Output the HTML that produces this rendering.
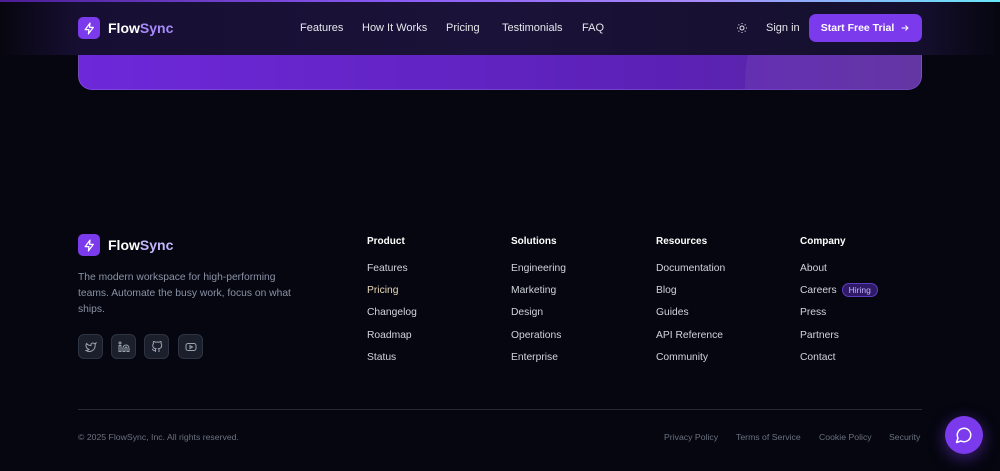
<!DOCTYPE html>
<html><head><meta charset="utf-8"><style>
*{margin:0;padding:0;box-sizing:border-box}
body{width:1000px;height:471px;background:#05060f;font-family:"Liberation Sans",sans-serif;position:relative;overflow:hidden;color:#e5e7eb}
.topline{position:absolute;left:0;top:0;width:1000px;height:2px;background:linear-gradient(90deg,#4c1d95,#8b5cf6 40%,#a78bfa 70%,#67e8f9)}
.nav{position:absolute;left:0;top:2px;width:1000px;height:53px;background:linear-gradient(90deg,#07060f 0%,#170f33 8%,#1a1238 50%,#150f2e 92%,#06060f 100%)}
.card{position:absolute;left:78px;top:55px;width:844px;height:35px;border-radius:0 0 14px 14px;background:linear-gradient(90deg,#6d28d9,#5b21b6 70%,#5b2a9e);overflow:hidden;border:1px solid rgba(167,139,250,.3);border-top:none}
.card:after{content:"";position:absolute;left:666px;top:-120px;width:300px;height:300px;border-radius:50%;background:rgba(255,255,255,.06)}
.logo{position:absolute;display:flex;align-items:center;gap:8px;font-weight:bold;font-size:14px;color:#fff}
.logo .ic{width:22px;height:22px;border-radius:5px;background:#7c3aed;display:flex;align-items:center;justify-content:center}
.logo span.s{color:#a78bfa}
.links a{position:absolute;top:22px;font-size:11px;color:#e5e7eb;text-decoration:none}
.btn{position:absolute;left:809px;top:14px;width:113px;height:28px;border-radius:7px;background:#7c3aed;color:#fff;font-size:10.5px;font-weight:bold;display:flex;align-items:center;justify-content:center;gap:6px}
.col{position:absolute;top:236px;font-size:10.3px}
.col h4{font-size:10px;color:#fff;margin-bottom:16px;font-weight:bold}
.col div{height:22.2px;color:#d1d5db}
.desc{position:absolute;left:78px;top:270px;width:222px;font-size:10.3px;line-height:16px;color:#8b93a7}
.soc{position:absolute;top:334px;width:25px;height:25px;border-radius:6px;background:#1a1f2b;border:1px solid #2e3442;display:flex;align-items:center;justify-content:center}
.hr{position:absolute;left:78px;top:409px;width:844px;height:1px;background:#262a36}
.foot{position:absolute;top:432px;font-size:8.7px;color:#6b7280}
.hiring{display:inline-block;margin-left:5px;padding:1px 6px;border-radius:8px;background:#2e1a66;border:1px solid #5b3cc4;color:#c4b5fd;font-size:8.5px}
.chat{position:absolute;left:945px;top:416px;width:38px;height:38px;border-radius:50%;background:#7c3aed;box-shadow:0 4px 16px rgba(124,58,237,.5);display:flex;align-items:center;justify-content:center}
</style></head><body>
<div class="topline"></div>
<div class="nav"></div>
<div class="card"></div>
<div class="logo" style="left:78px;top:17px"><div class="ic"><svg width="13" height="13" viewBox="0 0 24 24" fill="none" stroke="#fff" stroke-width="2.3" stroke-linejoin="round"><path d="M13 2L4 14h7l-1 8 9-12h-7z"/></svg></div><div>Flow<span class="s">Sync</span></div></div>
<div class="links"><a style="left:300px">Features</a><a style="left:362px">How It Works</a><a style="left:446px">Pricing</a><a style="left:502px">Testimonials</a><a style="left:582px">FAQ</a><a style="left:766px;top:22px">Sign in</a></div>
<svg style="position:absolute;left:736px;top:22px" width="12" height="12" viewBox="0 0 24 24" fill="none" stroke="#e5e7eb" stroke-width="2"><circle cx="12" cy="12" r="4"/><path d="M12 2v2M12 20v2M2 12h2M20 12h2M5 5l1.5 1.5M17.5 17.5L19 19M5 19l1.5-1.5M17.5 6.5L19 5"/></svg>
<div class="btn">Start Free Trial <svg width="10" height="10" viewBox="0 0 24 24" fill="none" stroke="#fff" stroke-width="2.5"><path d="M4 12h15M13 6l6 6-6 6"/></svg></div>

<div class="logo" style="left:78px;top:234px"><div class="ic"><svg width="13" height="13" viewBox="0 0 24 24" fill="none" stroke="#fff" stroke-width="2.3" stroke-linejoin="round"><path d="M13 2L4 14h7l-1 8 9-12h-7z"/></svg></div><div>Flow<span class="s" style="color:#c4b5fd">Sync</span></div></div>
<div class="desc">The modern workspace for high-performing teams. Automate the busy work, focus on what ships.</div>
<div class="soc" style="left:78px"><svg width="12" height="12" viewBox="0 0 24 24" fill="none" stroke="#9ca3af" stroke-width="2"><path d="M22 4s-.7 2.1-2 3.4c1.6 10-9.4 17.3-18 11.6 2.2.1 4.4-.6 6-2C3 15.5.5 9.6 3 5c2.2 2.6 5.6 4.1 9 4-.9-4.2 4-6.6 7-3.8 1.1 0 3-1.2 3-1.2z"/></svg></div>
<div class="soc" style="left:111px"><svg width="12" height="12" viewBox="0 0 24 24" fill="none" stroke="#9ca3af" stroke-width="2"><path d="M16 8a6 6 0 016 6v7h-4v-7a2 2 0 00-4 0v7h-4v-7a6 6 0 016-6zM2 9h4v12H2z"/><circle cx="4" cy="4" r="2"/></svg></div>
<div class="soc" style="left:144px"><svg width="12" height="12" viewBox="0 0 24 24" fill="none" stroke="#9ca3af" stroke-width="2"><path d="M9 19c-5 1.5-5-2.5-7-3m14 6v-3.9a3.4 3.4 0 00-1-2.6c3.1-.3 6.4-1.5 6.4-7A5.4 5.4 0 0020 4.8 5 5 0 0019.9 1S18.7.6 16 2.5a13.4 13.4 0 00-7 0C6.3.6 5.1 1 5.1 1A5 5 0 005 4.8a5.4 5.4 0 00-1.5 3.7c0 5.4 3.3 6.600 6.4 7a3.4 3.4 0 00-1 2.6V22"/></svg></div>
<div class="soc" style="left:178px"><svg width="12" height="12" viewBox="0 0 24 24" fill="none" stroke="#9ca3af" stroke-width="2"><rect x="2" y="5" width="20" height="14" rx="4"/><path d="M10 9l5 3-5 3z"/></svg></div>

<div class="col" style="left:367px"><h4>Product</h4><div>Features</div><div style="color:#e9d8b8">Pricing</div><div>Changelog</div><div>Roadmap</div><div>Status</div></div>
<div class="col" style="left:511px"><h4>Solutions</h4><div>Engineering</div><div>Marketing</div><div>Design</div><div>Operations</div><div>Enterprise</div></div>
<div class="col" style="left:656px"><h4>Resources</h4><div>Documentation</div><div>Blog</div><div>Guides</div><div>API Reference</div><div>Community</div></div>
<div class="col" style="left:800px"><h4>Company</h4><div>About</div><div style="margin-top:-2px">Careers<span class="hiring">Hiring</span></div><div style="margin-top:2px">Press</div><div>Partners</div><div>Contact</div></div>

<div class="hr"></div>
<div class="foot" style="left:78px">© 2025 FlowSync, Inc. All rights reserved.</div>
<div class="foot" style="left:664px">Privacy Policy</div>
<div class="foot" style="left:736px">Terms of Service</div>
<div class="foot" style="left:819px">Cookie Policy</div>
<div class="foot" style="left:889px">Security</div>
<div class="chat"><svg width="18" height="18" viewBox="0 0 24 24" fill="none" stroke="#fff" stroke-width="2" stroke-linejoin="round"><path d="M7.9 20A9 9 0 104 16.1L2 22z"/></svg></div>
</body></html>
